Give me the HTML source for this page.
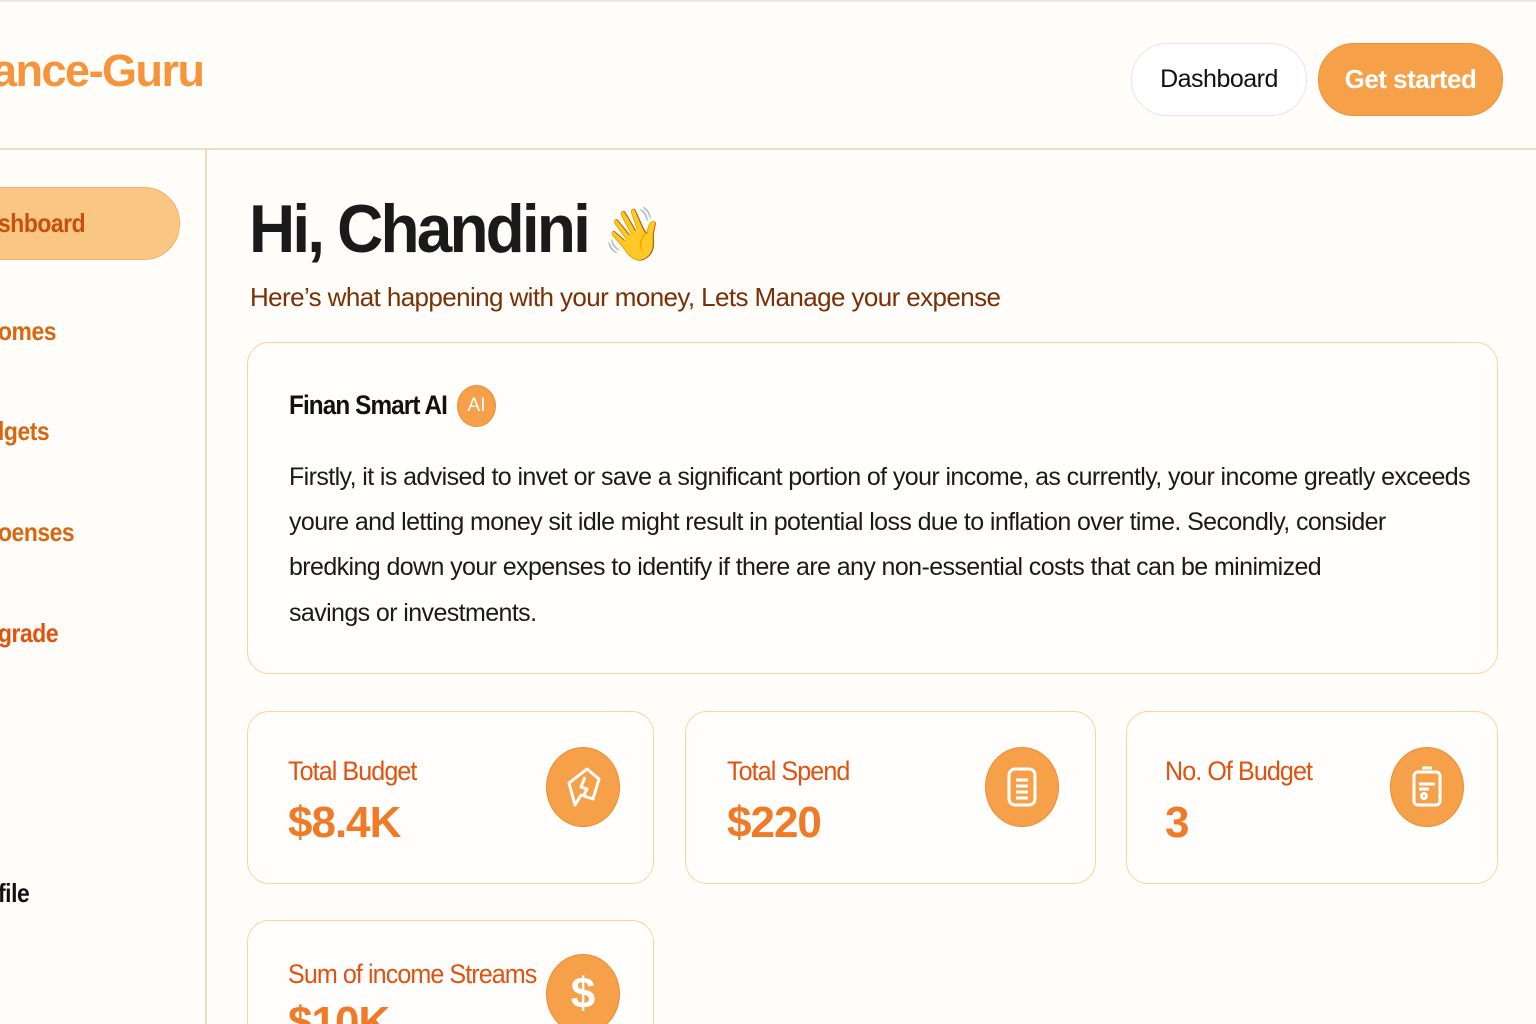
<!DOCTYPE html>
<html><head><meta charset="utf-8"><style>
*{margin:0;padding:0;box-sizing:border-box}
html,body{width:1536px;height:1024px;overflow:hidden}
body{background:#fffdfa;font-family:"Liberation Sans",sans-serif;position:relative}
.abs{position:absolute;white-space:nowrap}
.card{position:absolute;border:1.5px solid #fbd39a;border-radius:22px;background:#fffefc}
.ic{position:absolute;width:74px;height:80px;border-radius:50%;background:#f6a04a;border:1.5px solid #f08a2e;display:flex;align-items:center;justify-content:center}
.lbl{position:absolute;color:#e2520f;font-size:27px;letter-spacing:-1px;transform:scaleX(.93);transform-origin:left;white-space:nowrap}
.val{position:absolute;color:#f07a25;font-size:44px;font-weight:bold;letter-spacing:-1px}
.nav{position:absolute;left:-2px;color:#d8680f;font-size:26px;font-weight:bold;letter-spacing:-.5px;transform:scaleX(.88);transform-origin:left}
.p{position:absolute;left:289px;font-size:25px;color:#1a1a1a;letter-spacing:-.6px;white-space:nowrap}
</style></head><body>
<div style="position:absolute;top:0;left:0;right:0;height:2px;background:#e8e8e8"></div>
<div class="abs" style="left:-8px;top:45px;font-size:45px;font-weight:bold;color:#f7943a;letter-spacing:-1.5px">ance-Guru</div>
<div class="abs" style="left:1131px;top:43px;width:176px;height:73px;border:1.5px solid #e6e6e6;border-radius:36px;background:#fff;display:flex;align-items:center;justify-content:center;font-size:25px;color:#111;letter-spacing:-.5px">Dashboard</div>
<div class="abs" style="left:1318px;top:43px;width:185px;height:73px;border-radius:36px;background:#f6a04a;border:1.5px solid #f39033;display:flex;align-items:center;justify-content:center;font-size:26px;color:#fff;font-weight:bold;letter-spacing:-.5px">Get started</div>
<div style="position:absolute;top:148px;left:0;right:0;height:1.5px;background:#f3dcbd"></div>
<div style="position:absolute;top:149px;left:205px;width:1.5px;bottom:0;background:#f3dcbd"></div>
<div style="position:absolute;left:-40px;top:187px;width:220px;height:73px;border-radius:36px;background:#f9c683;border:1.5px solid #f6b263"></div>
<div class="nav" style="top:208px;color:#c8500d">shboard</div>
<div class="nav" style="top:316px">omes</div>
<div class="nav" style="top:416px">lgets</div>
<div class="nav" style="top:517px">oenses</div>
<div class="nav" style="top:618px;color:#e2520f">grade</div>
<div class="nav" style="top:878px;color:#111">file</div>
<div class="abs" style="left:249px;top:190px;font-size:68px;font-weight:bold;color:#1a1a1a;letter-spacing:-3px;transform:scaleX(.94);transform-origin:left">Hi, Chandini <span style="font-size:52px">👋</span></div>
<div class="abs" style="left:250px;top:282px;font-size:26px;color:#7a2f05;letter-spacing:-.6px">Here’s what happening with your money, Lets Manage your expense</div>
<div class="card" style="left:247px;top:342px;width:1251px;height:332px"></div>
<div class="abs" style="left:289px;top:390px;font-size:27px;font-weight:bold;color:#111;letter-spacing:-1px;transform:scaleX(.9);transform-origin:left">Finan Smart AI</div>
<div class="abs" style="left:457px;top:385px;width:39px;height:42px;border-radius:50%;background:#f6a04a;border:1px solid #f08a2e;color:#fff;font-size:19px;display:flex;align-items:center;justify-content:center">AI</div>
<div class="p" style="top:463px">Firstly, it is advised to invet or save a significant portion of your income, as currently, your income greatly exceeds</div>
<div class="p" style="top:508px">youre and letting money sit idle might result in potential loss due to inflation over time. Secondly, consider</div>
<div class="p" style="top:553px">bredking down your expenses to identify if there are any non-essential costs that can be minimized</div>
<div class="p" style="top:599px">savings or investments.</div>

<div class="card" style="left:247px;top:711px;width:407px;height:173px"></div>
<div class="lbl" style="left:288px;top:756px">Total Budget</div>
<div class="val" style="left:288px;top:798px">$8.4K</div>
<div class="ic" style="left:546px;top:747px"><svg width="40" height="44" viewBox="0 0 40 44" fill="none" stroke="#fff" stroke-width="3" stroke-linejoin="round"><path d="M6 18 L24 4 L36 14 L30 34 L18 30 L12 40 Z M22 12 L18 22 L24 24 L20 32"/></svg></div>
<div class="card" style="left:685px;top:711px;width:411px;height:173px"></div>
<div class="lbl" style="left:727px;top:756px">Total Spend</div>
<div class="val" style="left:727px;top:798px">$220</div>
<div class="ic" style="left:985px;top:747px"><svg width="34" height="44" viewBox="0 0 34 44" fill="none" stroke="#fff" stroke-width="3"><rect x="4" y="4" width="26" height="36" rx="6"/><path d="M11 15h12M11 21h12M11 27h12M11 33h12"/></svg></div>
<div class="card" style="left:1126px;top:711px;width:372px;height:173px"></div>
<div class="lbl" style="left:1165px;top:756px">No. Of Budget</div>
<div class="val" style="left:1165px;top:798px">3</div>
<div class="ic" style="left:1390px;top:747px"><svg width="34" height="44" viewBox="0 0 34 44" fill="none" stroke="#fff" stroke-width="3"><rect x="4" y="7" width="26" height="33" rx="4"/><path d="M12 3h10M9 19h16M9 24h10"/><circle cx="14" cy="31" r="2.5"/></svg></div>
<div class="card" style="left:247px;top:920px;width:407px;height:140px"></div>
<div class="lbl" style="left:288px;top:959px">Sum of income Streams</div>
<div class="val" style="left:288px;top:998px">$10K</div>
<div class="ic" style="left:546px;top:954px"><span style="color:#fff;font-size:44px;font-weight:bold">$</span></div>
</body></html>
